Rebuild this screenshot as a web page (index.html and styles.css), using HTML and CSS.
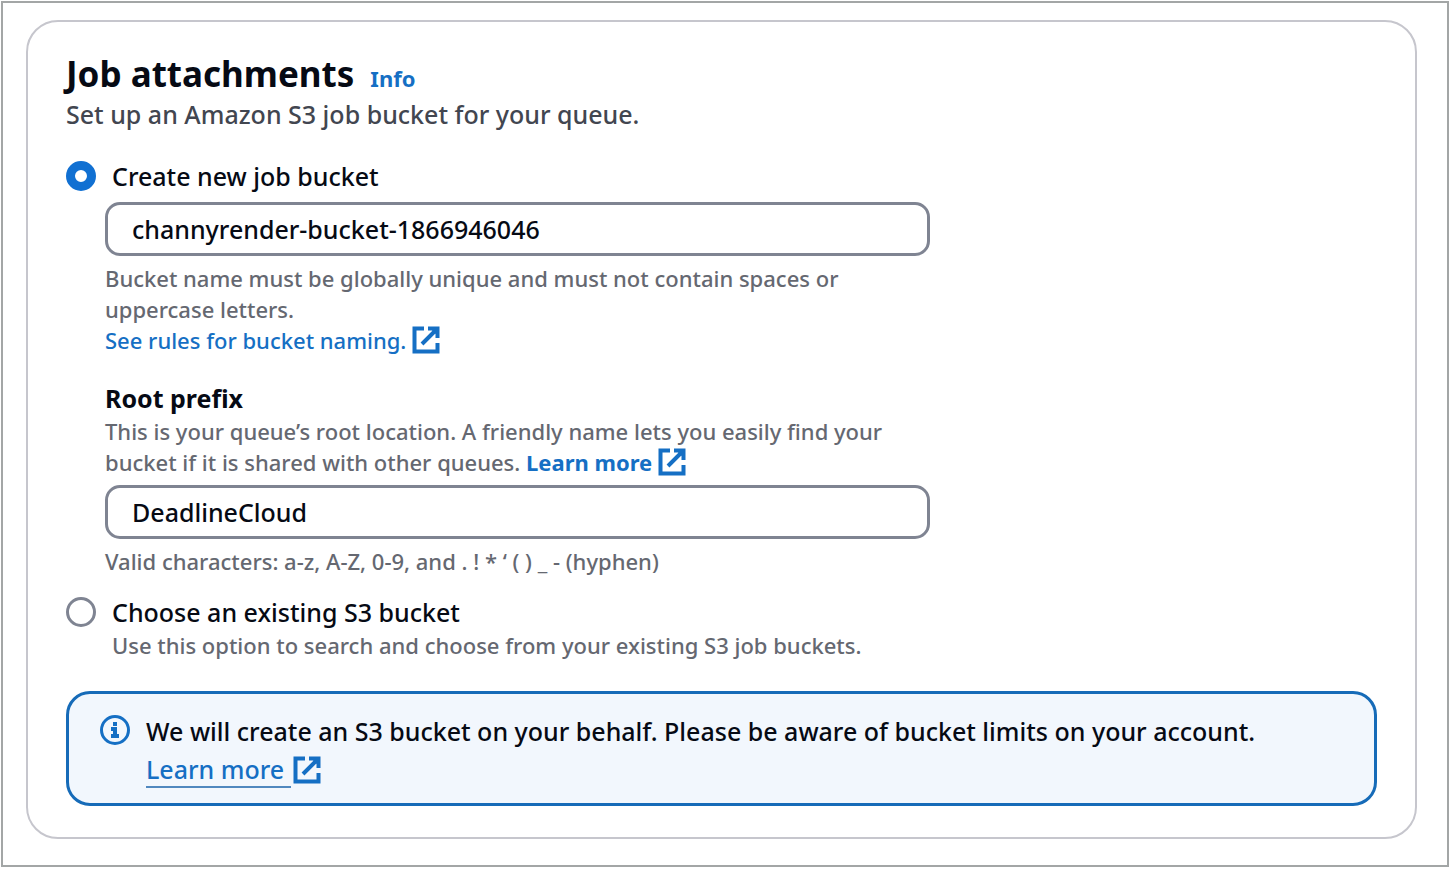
FILE: index.html
```html
<!DOCTYPE html>
<html lang="en">
<head>
<meta charset="utf-8">
<title>Job attachments</title>
<link rel="stylesheet" href="styles.css">
</head>
<body>
<svg class="defs" aria-hidden="true">
  <symbol id="external" viewBox="0 0 28 28">
    <path d="M12 2.5H2.5v23h23V17M16 2.5h9.500v9.500M25 3 10 18" fill="none" stroke="currentColor" stroke-width="4"/>
    <path d="M18 2h8v8z" fill="currentColor"/>
  </symbol>
</svg>
<main class="frame">
  <form class="card">
    <header class="card-header">
      <div class="title-row">
        <h1 class="title">Job attachments</h1>
        <a class="info" href="#">Info</a>
      </div>
      <p class="subtitle">Set up an Amazon S3 job bucket for your queue.</p>
    </header>

    <div class="option">
      <input class="radio" type="radio" name="bucket" id="create" checked>
      <label class="option-label" for="create">Create new job bucket</label>
    </div>
    <div class="fields">
      <input class="text-input" type="text" aria-label="Bucket name" aria-describedby="bucket-help" value="channyrender-bucket-1866946046">
      <p class="hint hint-below" id="bucket-help">Bucket name must be globally unique and must not contain spaces or uppercase letters.<br>
        <a class="link" href="#">See rules for bucket naming. <svg class="external"><use href="#external"/></svg></a></p>
      <label class="field-label" for="prefix">Root prefix</label>
      <p class="hint hint-above">This is your queue’s root location. A friendly name lets you easily find your bucket if it is shared with other queues. <a class="link link-strong" href="#">Learn more <svg class="external"><use href="#external"/></svg></a></p>
      <input class="text-input" type="text" id="prefix" aria-describedby="prefix-help" value="DeadlineCloud">
      <p class="hint hint-below" id="prefix-help">Valid characters: a-z, A-Z, 0-9, and . ! * ‘ ( ) _ - (hyphen)</p>
    </div>

    <div class="option option-existing">
      <input class="radio" type="radio" name="bucket" id="existing" aria-describedby="existing-help">
      <label class="option-label" for="existing">Choose an existing S3 bucket</label>
    </div>
    <p class="hint option-hint" id="existing-help">Use this option to search and choose from your existing S3 job buckets.</p>

    <div class="alert" role="status">
      <svg class="alert-icon" viewBox="0 0 30 30" aria-hidden="true">
        <circle cx="15" cy="15" r="13.500" fill="none" stroke="currentColor" stroke-width="3"/>
        <path d="M13 7h4v4h-4zM11 12h6v7h2v4h-8v-4h2v-3h-2z" fill="currentColor"/>
      </svg>
      <p class="alert-text">We will create an S3 bucket on your behalf. Please be aware of bucket limits on your account.<br>
        <a class="link alert-link" href="#"><span class="underlined">Learn more&nbsp;</span><svg class="external"><use href="#external"/></svg></a></p>
    </div>
  </form>
</main>
</body>
</html>
```
FILE: styles.css
```css
* { box-sizing: border-box; }
body {
  margin: 0;
  padding: 1px 5px 4px 1px;
  background: #fff;
  color: #060a14;
  font: 500 25px/36px "Noto Sans", "Open Sans", sans-serif;
}
h1, p { margin: 0; }
.defs { position: absolute; width: 0; height: 0; }
.frame {
  padding: 17px 30px 26px 23px;
  border: 2px solid #a3a6a6;
}
.card {
  padding: 30px 38px 31px 38px;
  border: 2px solid #c6c6cd;
  border-radius: 32px;
}
.title-row { display: flex; align-items: baseline; gap: 16px; }
.title { font-size: 35px; line-height: 44px; font-weight: 700; }
.info { color: #156fc4; font-size: 22px; line-height: 31px; font-weight: 700; text-decoration: none; }
.subtitle { color: #424650; }
.option { display: flex; align-items: center; gap: 16px; margin-top: 26px; }
.option-existing { margin-top: 17px; }
.radio {
  appearance: none;
  flex: none;
  width: 30px;
  height: 30px;
  margin: 0;
  border: 3px solid #7f8492;
  border-radius: 50%;
  background: #fff;
}
.radio:checked { border: 9px solid #1170d2; }
.fields { max-width: 864px; padding: 8px 0 0 39px; }
.text-input {
  display: block;
  width: 100%;
  height: 54px;
  padding: 0 24px;
  border: 3px solid #7f8492;
  border-radius: 15px;
  background: #fff;
  color: inherit;
  font: inherit;
}
.hint { color: #656871; font-size: 22px; line-height: 31px; }
.hint-below { padding-top: 7px; }
.hint-above { padding-bottom: 7px; }
.field-label { display: block; margin-top: 24px; font-weight: 700; }
.option-hint { padding-left: 46px; }
.link { color: #156fc4; text-decoration: none; font-weight: 500; white-space: nowrap; }
.link-strong { font-weight: 700; }
.external { width: 28px; height: 28px; vertical-align: -5px; }
.alert {
  display: flex;
  gap: 16px;
  margin-top: 30px;
  padding: 18px 31px 15px;
  border: 3px solid #166bb8;
  border-radius: 24px;
  background: #f2f7fd;
}
.alert-icon { flex: none; width: 30px; height: 30px; margin-top: 3px; color: #156fc4; }
.alert-text { line-height: 38px; }
.alert-link .external { margin-left: 2px; }
.underlined { border-bottom: 2px solid #5088bf; }
```
